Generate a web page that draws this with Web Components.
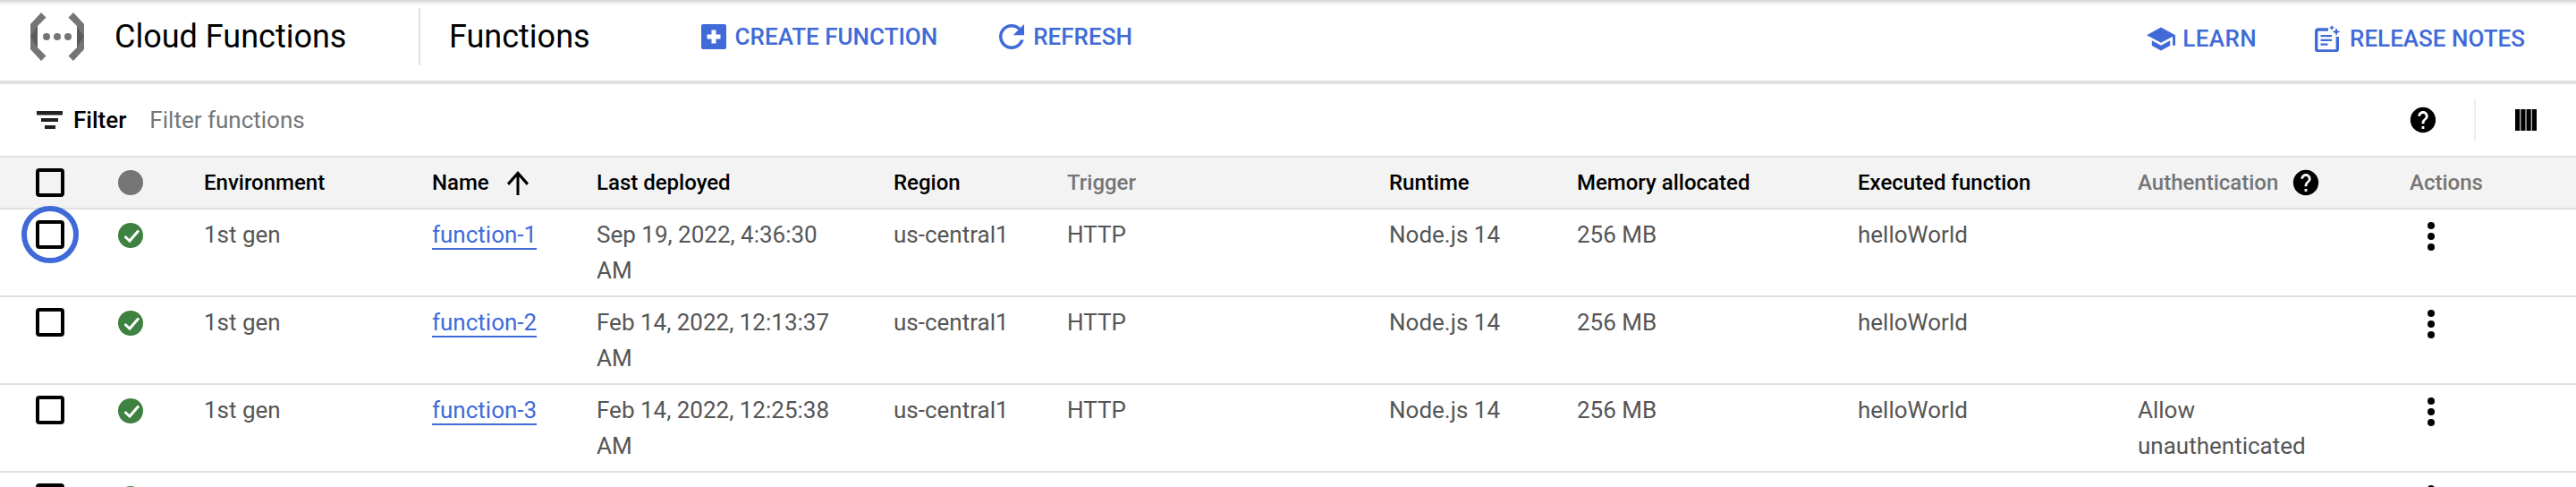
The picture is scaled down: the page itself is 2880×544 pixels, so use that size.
<!DOCTYPE html>
<html>
<head>
<meta charset="utf-8">
<title>Cloud Functions</title>
<style>
html, body { margin: 0; height: 544px; overflow: hidden; background: #fff; }
body { font-family: Roboto, "Liberation Sans", sans-serif; --cols: 132px 96px 255px 184px 332px 194px 360px 210px 314px 313px 304px 186px; --blue: #3f6ad8; }
svg { display: block; }
</style>
</head>
<body>
<cf-app-bar>
    <cf-action slot="left" label="CREATE FUNCTION" style="margin-left:124px">
        <svg slot="icon" width="28" height="28" viewBox="0 0 28 28"><rect width="28" height="28" rx="2" fill="#3f6ad8"/><path d="M11.5 6.5h5v5h5v5h-5v5h-5v-5h-5v-5h5z" fill="#fff"/></svg>
    </cf-action>
    <cf-action slot="left" label="REFRESH" style="margin-left:69px">
        <svg slot="icon" width="28" height="28" viewBox="4 4 16 16" fill="#3f6ad8"><path d="M17.65 6.35C16.2 4.9 14.21 4 12 4c-4.42 0-7.99 3.58-7.99 8s3.57 8 7.99 8c3.73 0 6.84-2.55 7.73-6h-2.08c-.82 2.33-3.04 4-5.65 4-3.31 0-6-2.69-6-6s2.69-6 6-6c1.66 0 3.14.69 4.22 1.78L13 11h7V4l-2.35 2.35z"/></svg>
    </cf-action>
    <cf-action slot="right" label="LEARN" style="gap:8px;letter-spacing:.4px">
        <svg slot="icon" width="32" height="27" viewBox="1 3 22 18" fill="#3f6ad8"><path d="M5 13.18v4L12 21l7-3.82v-4L12 17l-7-3.82zM12 3L1 9l11 6 9-4.91V17h2V9L12 3z"/></svg>
    </cf-action>
    <cf-action slot="right" label="RELEASE NOTES" style="margin-left:65px;gap:9px">
        <svg slot="icon" width="30" height="30" viewBox="0 0 30 30" fill="#3f6ad8"><path d="M15 5H4a2.300 2.300 0 0 0-2.300 2.300v19.400A2.300 2.300 0 0 0 4 29h19a2.300 2.300 0 0 0 2.300-2.300V13" fill="none" stroke="#3f6ad8" stroke-width="3.4"/><path d="M6.500 11h12.500v2.300H6.500zM6.500 15.700h12.500V18H6.500zM6.500 20.400h8v2.300h-8z"/><path d="M19 0l1 2 2 1-2 1-1 2-1-2-2-1 2-1zM24 3l1.300 3.200L28.500 7.500l-3.200 1.300L24 12l-1.300-3.200L19.500 7.500l3.200-1.300z"/></svg>
    </cf-action>
</cf-app-bar>
<cf-filter-bar></cf-filter-bar>
<cf-row head>
    <cf-checkbox></cf-checkbox>
    <cf-status neutral></cf-status>
    <span>Environment</span>
    <cf-sort-head>Name</cf-sort-head>
    <span>Last deployed</span>
    <span>Region</span>
    <span style="color:#757575">Trigger</span>
    <span>Runtime</span>
    <span>Memory allocated</span>
    <span>Executed function</span>
    <cf-help-head style="color:#757575">Authentication</cf-help-head>
    <span style="color:#757575">Actions</span>
</cf-row>
<cf-row>
    <cf-checkbox focused></cf-checkbox>
    <cf-status></cf-status>
    <cf-cell>1st gen</cf-cell>
    <cf-cell><cf-link>function-1</cf-link></cf-cell>
    <cf-cell>Sep 19, 2022, 4:36:30 AM</cf-cell>
    <cf-cell>us-central1</cf-cell>
    <cf-cell>HTTP</cf-cell>
    <cf-cell>Node.js 14</cf-cell>
    <cf-cell>256 MB</cf-cell>
    <cf-cell>helloWorld</cf-cell>
    <cf-cell></cf-cell>
    <cf-kebab></cf-kebab>
</cf-row>
<cf-row>
    <cf-checkbox></cf-checkbox>
    <cf-status></cf-status>
    <cf-cell>1st gen</cf-cell>
    <cf-cell><cf-link>function-2</cf-link></cf-cell>
    <cf-cell>Feb 14, 2022, 12:13:37 AM</cf-cell>
    <cf-cell>us-central1</cf-cell>
    <cf-cell>HTTP</cf-cell>
    <cf-cell>Node.js 14</cf-cell>
    <cf-cell>256 MB</cf-cell>
    <cf-cell>helloWorld</cf-cell>
    <cf-cell></cf-cell>
    <cf-kebab></cf-kebab>
</cf-row>
<cf-row>
    <cf-checkbox></cf-checkbox>
    <cf-status></cf-status>
    <cf-cell>1st gen</cf-cell>
    <cf-cell><cf-link>function-3</cf-link></cf-cell>
    <cf-cell>Feb 14, 2022, 12:25:38 AM</cf-cell>
    <cf-cell>us-central1</cf-cell>
    <cf-cell>HTTP</cf-cell>
    <cf-cell>Node.js 14</cf-cell>
    <cf-cell>256 MB</cf-cell>
    <cf-cell>helloWorld</cf-cell>
    <cf-cell style="max-width:240px">Allow unauthenticated</cf-cell>
    <cf-kebab></cf-kebab>
</cf-row>
<cf-row style="height:16px;overflow:hidden;border:0">
    <cf-checkbox></cf-checkbox>
    <cf-status></cf-status>
    <cf-cell></cf-cell><cf-cell></cf-cell><cf-cell></cf-cell><cf-cell></cf-cell><cf-cell></cf-cell><cf-cell></cf-cell><cf-cell></cf-cell><cf-cell></cf-cell><cf-cell></cf-cell>
    <cf-kebab></cf-kebab>
</cf-row>

<script>
const HELP = 'M12 2C6.48 2 2 6.48 2 12s4.48 10 10 10 10-4.48 10-10S17.52 2 12 2zm1 17h-2v-2h2v2zm2.07-7.75l-.9.92C13.45 12.9 13 13.5 13 15h-2v-.5c0-1.1.45-2.1 1.17-2.83l1.24-1.26c.37-.36.59-.86.59-1.41 0-1.1-.9-2-2-2s-2 .9-2 2H8c0-2.21 1.79-4 4-4s4 1.79 4 4c0 .88-.36 1.68-.93 2.25z'

// every element here is only markup + styles, so one small base class is enough
function define(name, html, setup) {
    customElements.define(name, class extends HTMLElement {
        constructor() {
            super()
            this.shadow = this.attachShadow({ mode: 'open' })
        }
        connectedCallback() {
            this.shadow.innerHTML = html
            if (setup) setup(this)
        }
    })
}

define('cf-app-bar', `
    <style>
        :host { display: flex; align-items: center; box-sizing: border-box; height: 94px; padding-bottom: 8px; border-bottom: 4px solid #e0e0e0; box-shadow: inset 0 6px 5px -4px rgba(0,0,0,.22); color: #000; font-size: 36px; }
        .logo { margin-left: 34px; width: 60px; height: 54px; }
        .product { margin-left: 34px; width: 340px; }
        .sep { width: 2px; height: 64px; background: #e0e0e0; }
        .page { margin-left: 32px; }
        .group { display: flex; align-items: center; }
        .right { margin-left: auto; margin-right: 57px; padding-top: 4px; }
    </style>
    <svg class="logo" viewBox="34 15 60 54">
        <path d="M46 15l5.500 5.500-9.500 9.500v24l9.500 9.500L46 69 34 56V28z" fill="#757575"/>
        <path d="M82 15l-5.500 5.500 9.500 9.500v24l-9.500 9.500L82 69l12-13V28z" fill="#757575"/>
        <path d="M34 42l8-12v24zM94 42l-8-12v24z" fill="#5c5c5c"/>
        <circle cx="52" cy="42" r="4" fill="#757575"/><circle cx="64" cy="42" r="4" fill="#757575"/><circle cx="76" cy="42" r="4" fill="#757575"/>
    </svg>
    <span class="product">Cloud Functions</span>
    <span class="sep"></span>
    <span class="page">Functions</span>
    <div class="group"><slot name="left"></slot></div>
    <div class="group right"><slot name="right"></slot></div>
`)

define('cf-action', `
    <style>
        :host { display: flex; align-items: center; gap: 10px; color: var(--blue); font-size: 26px; font-weight: 500; }
    </style>
    <slot name="icon"></slot><span id="label"></span>
`, el => { el.shadow.getElementById('label').textContent = el.getAttribute('label') })

define('cf-filter-bar', `
    <style>
        :host { display: flex; align-items: center; box-sizing: border-box; height: 82px; padding: 0 44px 0 41px; border-bottom: 2px solid #e0e0e0; font-size: 26px; }
        .bars { width: 29px; height: 20px; }
        b { margin-left: 12px; font-weight: 500; color: #000; }
        .hint { margin-left: 26px; color: #757575; }
        .help { margin-left: auto; width: 34px; height: 34px; }
        .sep { width: 2px; height: 48px; margin: 0 44px 0 40px; background: #eceff1; }
    </style>
    <svg class="bars" viewBox="0 0 29 20" fill="#202124"><path d="M0 0h29v4.500H0zM5 8h19v4H5zM9 16h12v4H9z"/></svg>
    <b>Filter</b>
    <span class="hint">Filter functions</span>
    <svg class="help" viewBox="0 0 24 24"><path d="${HELP}"/></svg>
    <span class="sep"></span>
    <svg width="24" height="24" viewBox="0 0 24 24"><path d="M0 0h5.250v24H0zM6.250 0h5.250v24H6.250zM12.500 0h5.250v24H12.500zM18.750 0H24v24h-5.250z"/></svg>
`)

define('cf-row', `
    <style>
        :host { --box-top: 6px; display: grid; grid-template-columns: var(--cols); align-items: start; box-sizing: border-box; height: 98px; padding-top: 6px; border-bottom: 2px solid #e0e0e0; font-size: 26px; line-height: 40px; color: #555; }
        :host([head]) { --box-top: 0; height: 58px; padding: 0; align-items: center; background: #f3f3f3; color: #000; font-size: 24px; font-weight: 500; }
    </style>
    <slot></slot>
`)

define('cf-cell', `
    <style>
        :host { display: block; margin-top: 2px; max-width: 280px; }
    </style>
    <slot></slot>
`)

define('cf-link', `
    <style>
        :host { color: var(--blue); border-bottom: 2px solid var(--blue); }
    </style>
    <slot></slot>
`)

define('cf-checkbox', `
    <style>
        :host { display: block; position: relative; box-sizing: border-box; width: 32px; height: 32px; margin: var(--box-top) 0 0 40px; border: 4px solid #000; border-radius: 4px; }
        .ring { display: none; position: absolute; left: -20px; top: -20px; width: 64px; height: 64px; box-sizing: border-box; border: 6px solid var(--blue); border-radius: 50%; }
        :host([focused]) .ring { display: block; }
    </style>
    <div class="ring"></div>
`)

define('cf-status', `
    <style>
        :host { display: block; width: 28px; height: 28px; }
        :host(:not([neutral])) { margin-top: 8px; }
    </style>
    <svg width="28" height="28" viewBox="0 0 28 28"><circle cx="14" cy="14" r="14" id="dot" fill="#3e8141"/><path id="tick" d="M7.500 15l5.500 5L23 8.500" fill="none" stroke="#fff" stroke-width="3"/></svg>
`, el => {
    if (el.hasAttribute('neutral')) {
        el.shadow.getElementById('dot').setAttribute('fill', '#757575')
        el.shadow.getElementById('tick').remove()
    }
})

define('cf-sort-head', `
    <style>
        :host { display: flex; align-items: center; gap: 20px; }
    </style>
    <slot></slot>
    <svg width="24" height="27" viewBox="4 4 16 16" preserveAspectRatio="none"><path d="M4 12l1.410 1.410L11 7.830V20h2V7.830l5.580 5.590L20 12l-8-8-8 8z"/></svg>
`)

define('cf-help-head', `
    <style>
        :host { display: flex; align-items: center; gap: 14px; }
        svg { width: 34px; height: 34px; }
    </style>
    <slot></slot>
    <svg viewBox="0 0 24 24"><path d="${HELP}"/></svg>
`)

define('cf-kebab', `
    <style>
        :host { display: block; width: 48px; height: 48px; }
    </style>
    <svg width="48" height="48" viewBox="0 0 48 48"><circle cx="24" cy="12" r="4"/><circle cx="24" cy="24" r="4"/><circle cx="24" cy="36" r="4"/></svg>
`)
</script>
</body>
</html>
